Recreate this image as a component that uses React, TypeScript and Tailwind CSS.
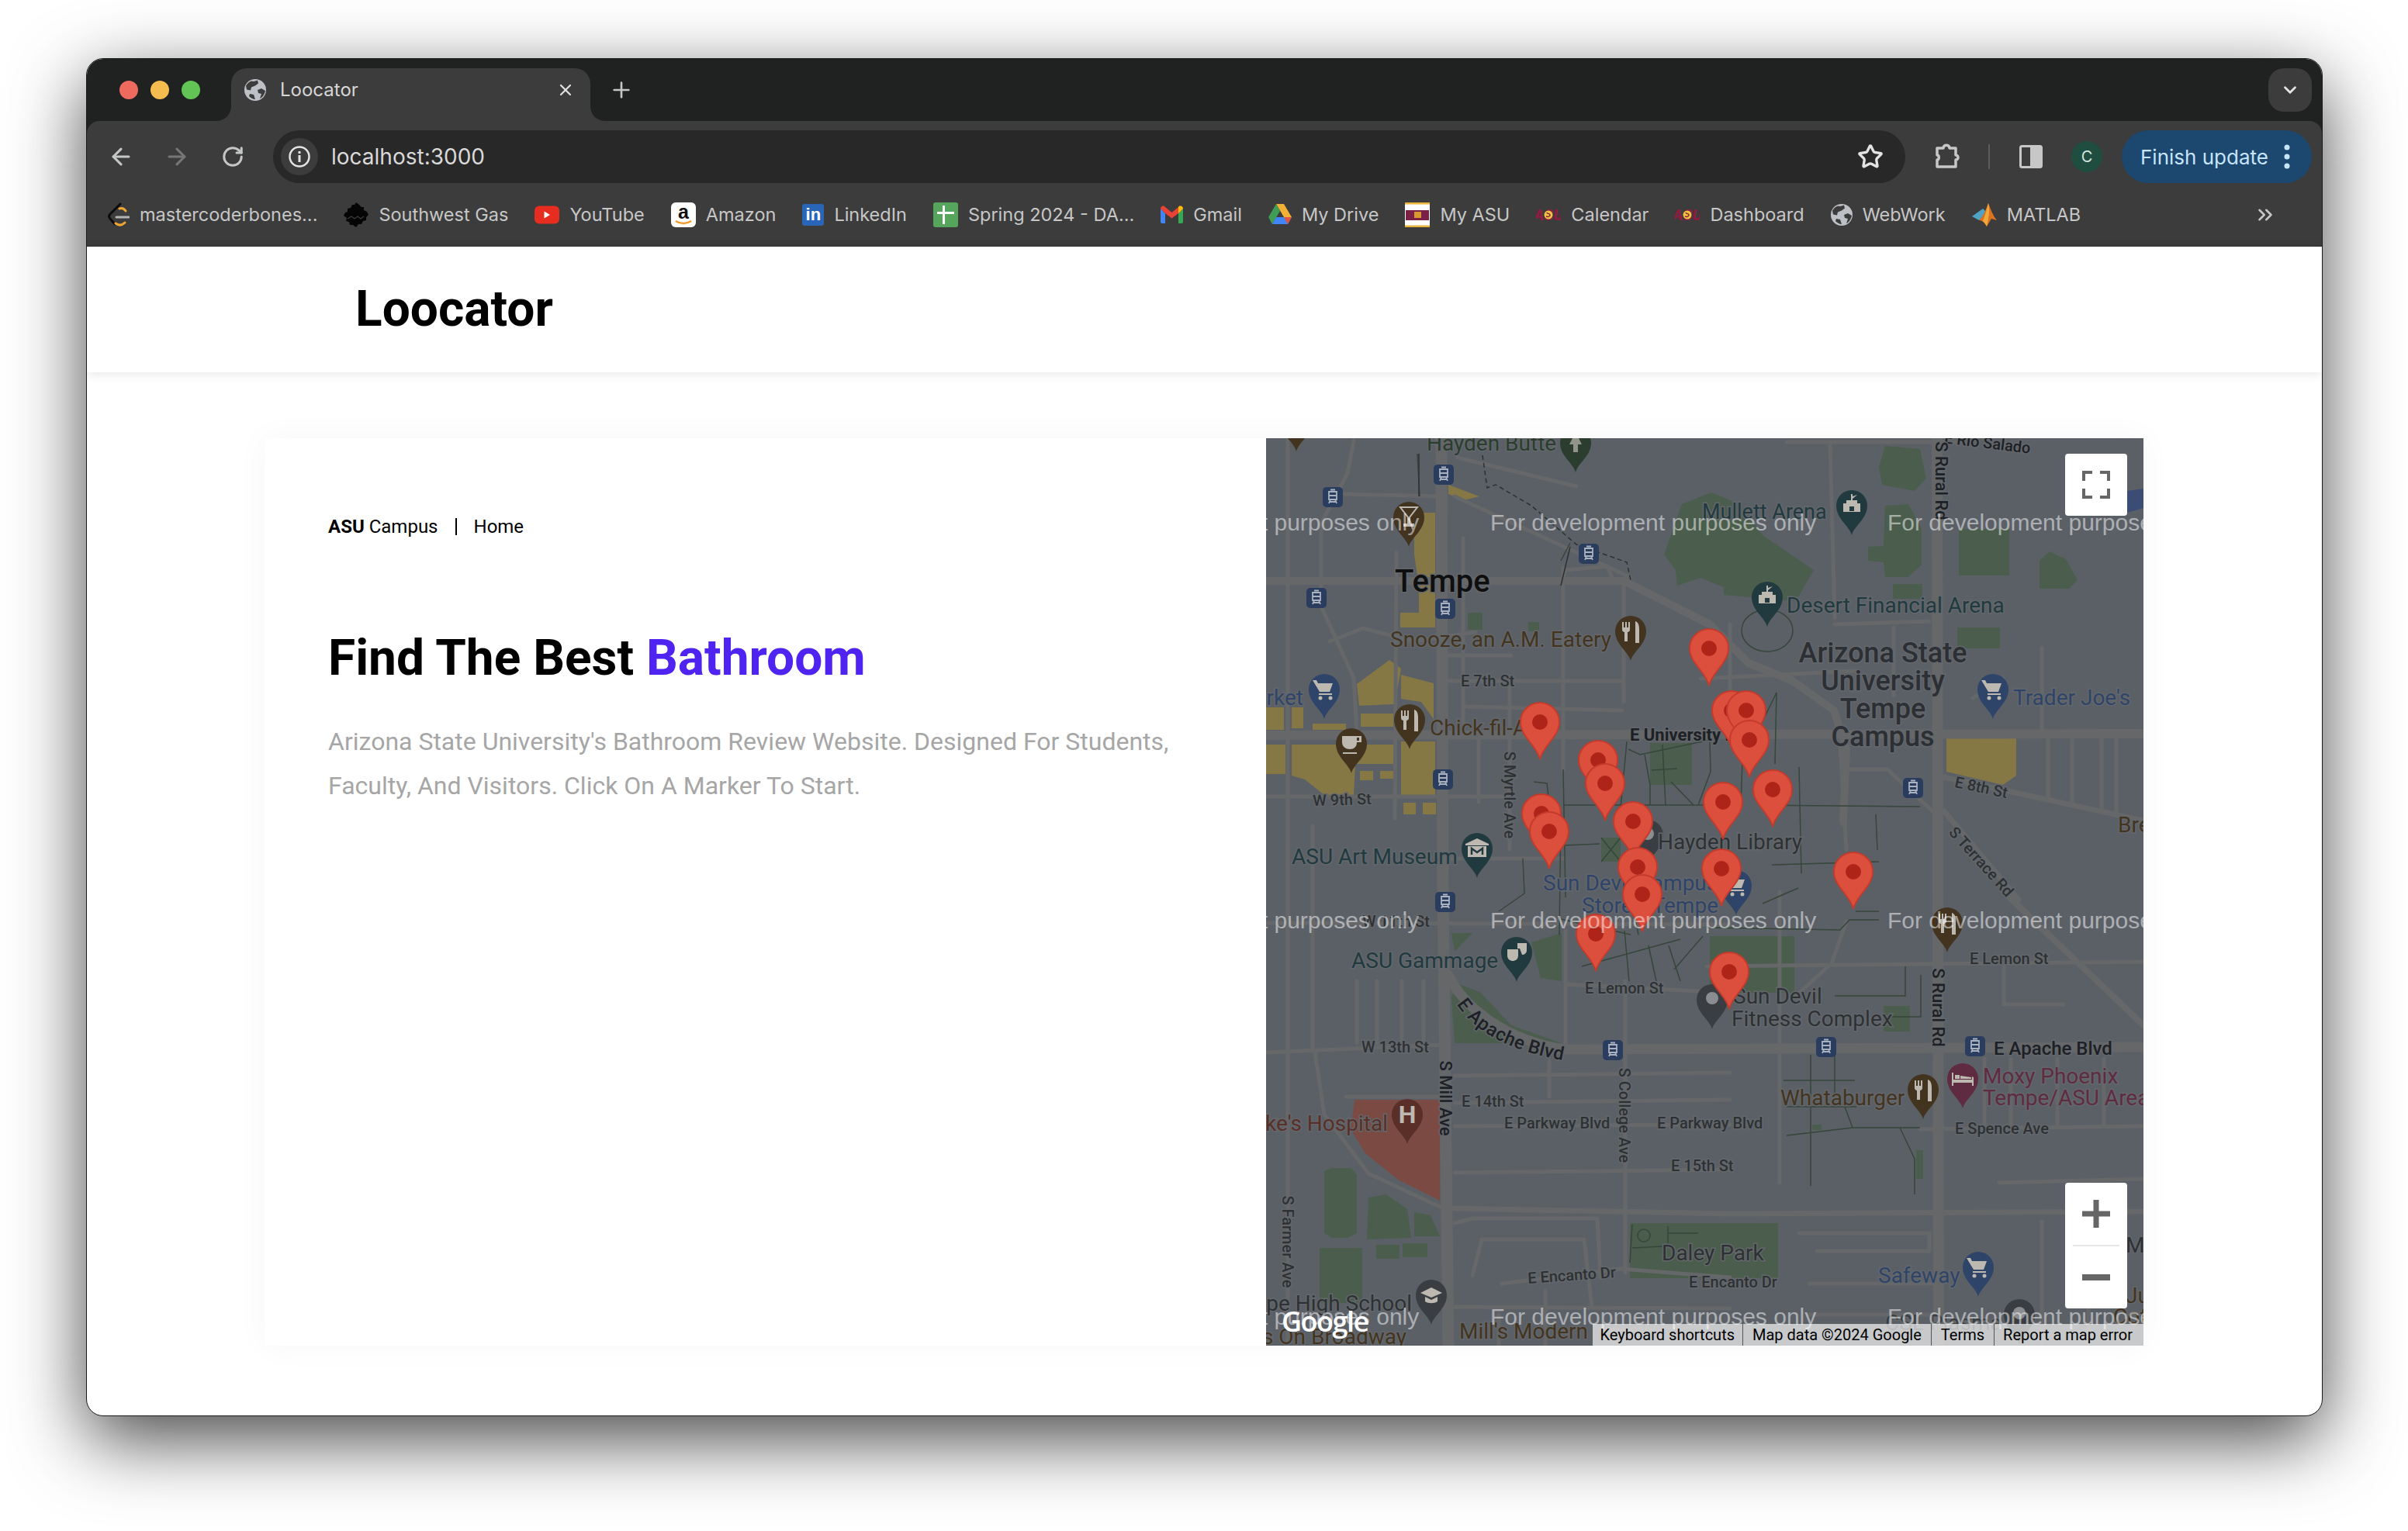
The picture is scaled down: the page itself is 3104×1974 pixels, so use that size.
import { ArrowLeft, ArrowRight, RotateCw, Star, X, Plus, ChevronDown, ChevronsRight } from "lucide-react";

const Globe = ({ size = 28 }: { size?: number }) => (
  <svg width={size} height={size} viewBox="0 0 28 28" className="shrink-0">
    <circle cx="14" cy="14" r="14" fill="#bdc1c6" />
    <path d="M9 2.5c3 1 5 0 8-1l1 4-4 3-5 2-1 4-5-1-1-5c2-3 4-5 7-6Z" fill="#3c3c3c" />
    <path d="M27 15l-5-3-5 2 1 4 4 1-2 6c3-1 6-5 7-10ZM7 19l5 1 2 6c-3 0-6-2-8-4Z" fill="#3c3c3c" />
  </svg>
);

const AsuMark = () => (
  <svg width="32" height="26" viewBox="0 0 32 26" className="shrink-0">
    <text x="16" y="20" textAnchor="middle" fontSize="20" fontWeight="900" fontStyle="italic" fill="#8c1d40" fontFamily="Roboto">ASU</text>
    <circle cx="16" cy="13" r="5.500" fill="#efc23f" />
    <path d="M13 15c3 1 5 0 5-2s-4-1-4-3" stroke="#8c1d40" strokeWidth="1.5" fill="none" />
  </svg>
);

const bookmarks = [
  {
    label: "mastercoderbones...",
    icon: (
      <svg width="28" height="32" viewBox="0 0 28 32" className="shrink-0">
        <path d="M16 2 3 15c-2 2-2 4 0 6l6 7" stroke="#0c0c0c" strokeWidth="3" fill="none" strokeLinecap="round" />
        <path d="M15 8c3-1 6 0 8 3M10 27c4 3 8 3 12-1" stroke="#f0a633" strokeWidth="3" fill="none" strokeLinecap="round" />
        <path d="M11 19h16" stroke="#b3b3b3" strokeWidth="3" strokeLinecap="round" />
      </svg>
    ),
  },
  {
    label: "Southwest Gas",
    icon: (
      <svg width="32" height="32" viewBox="0 0 32 32" className="shrink-0">
        <path d="M16 0l4 3 3 3 3 0 0 4 4 2 2 4-3 3 0 4-4 1-2 4-4 0-3 4-4-3-4 0-1-4-4-1 1-4-4-3 2-4 3-1 0-4 4-1 2-4 3 0Z" fill="#050505" />
        <path d="M5 21l5-3 4 3 4-3 4 3 4-3" stroke="#3c3c3c" strokeWidth="1.2" fill="none" />
      </svg>
    ),
  },
  {
    label: "YouTube",
    icon: (
      <svg width="32" height="24" viewBox="0 0 32 24" className="shrink-0">
        <rect width="32" height="23" y="0.5" rx="6" fill="#e62d20" />
        <path d="M12.5 7.5v9l7.5-4.5Z" fill="#fff" />
      </svg>
    ),
  },
  {
    label: "Amazon",
    icon: (
      <svg width="32" height="32" viewBox="0 0 32 32" className="shrink-0">
        <rect width="32" height="32" rx="6" fill="#fff" />
        <text x="16" y="21" textAnchor="middle" fontSize="25" fontWeight="700" fill="#111" fontFamily="Liberation Sans">a</text>
        <path d="M6 24c6 4 14 4 20 0" stroke="#f09a2a" strokeWidth="2.4" fill="none" />
      </svg>
    ),
  },
  {
    label: "LinkedIn",
    icon: (
      <span className="flex h-[28px] w-[28px] shrink-0 items-center justify-center rounded-[3px] bg-[#2a66b8] font-['Liberation_Sans',sans-serif] text-[22px] font-bold leading-none text-white">
        in
      </span>
    ),
  },
  {
    label: "Spring 2024 - DA...",
    icon: (
      <svg width="32" height="32" viewBox="0 0 32 32" className="shrink-0">
        <rect width="32" height="32" rx="3" fill="#55a65c" />
        <path d="M12 4h3v8h12v3H15v13h-3V15H5v-3h7Z" fill="#fff" />
      </svg>
    ),
  },
  {
    label: "Gmail",
    icon: (
      <svg width="29" height="23" viewBox="0 0 29 23" className="shrink-0">
        <path d="M0 4v17a2 2 0 0 0 2 2h4V10Z" fill="#4285f4" />
        <path d="M29 4v17a2 2 0 0 1-2 2h-4V10Z" fill="#34a853" />
        <path d="M0 4c0-3 4-5 6-2l8.500 7L23 2c2-3 6-1 6 2l-6 6-8.500 6.500L6 10Z" fill="#ea4335" />
        <path d="M23 2c2-3 6-1 6 2l-6 6Z" fill="#fbbc04" />
      </svg>
    ),
  },
  {
    label: "My Drive",
    icon: (
      <svg width="30" height="27" viewBox="0 0 30 27" className="shrink-0">
        <path d="M10 0h10l10 17H20Z" fill="#f2b134" />
        <path d="M10 0 0 17l5 9 10-17Z" fill="#3f9d55" />
        <path d="M5 26h20l5-9H10Z" fill="#4285f4" />
        <path d="M20 17h10l-5 9Z" fill="#e0533f" />
      </svg>
    ),
  },
  {
    label: "My ASU",
    icon: (
      <svg width="32" height="32" viewBox="0 0 32 32" className="shrink-0">
        <rect width="32" height="32" fill="#fff" />
        <rect width="32" height="2.500" fill="#e9b43c" />
        <rect y="29.500" width="32" height="2.500" fill="#e9b43c" />
        <rect x="1" y="10" width="30" height="13" fill="#7c2146" />
        <rect x="12" y="12" width="9" height="8" fill="#d79a33" />
      </svg>
    ),
  },
  { label: "Calendar", icon: <AsuMark /> },
  { label: "Dashboard", icon: <AsuMark /> },
  { label: "WebWork", icon: <Globe /> },
  {
    label: "MATLAB",
    icon: (
      <svg width="32" height="30" viewBox="0 0 32 30" className="shrink-0">
        <path d="M0 17 14 7l5 5-10 10Z" fill="#4fa3c7" />
        <path d="M21 0c3 8 6 16 11 22l-7-2-6 10c-3-5-6-8-10-8 6-6 9-14 12-22Z" fill="#d9731f" />
        <path d="M21 0c2 8 1 18-2 30-1-3-3-5-5-7 3-7 5-15 7-23Z" fill="#f2a93b" />
      </svg>
    ),
  },
];

const pins = [
  [571, 271], [353, 366], [428, 415], [437, 445], [355, 484], [365, 507], [473, 494], [479, 553],
  [485, 588], [589, 469], [653, 453], [587, 555], [757, 559], [600, 351], [619, 351], [623, 389],
  [425, 639], [597, 688],
];

const mainRoads: [string, number][] = [
  ["M226 0L228 585L235 1170", 15],
  ["M865 0L866 585L867 1170", 14],
  ["M0 383L1131 381", 12],
  ["M0 184L461 184L572 240L622 290L679 313L732 351L748 400L744 495", 10],
  ["M235 692C245 715 285 770 381 788L1131 785", 13],
  ["M874 437L1131 493", 7],
  ["M874 481L970 595", 7],
  ["M951 585L1131 757", 8],
  ["M243 993L598 1000L1131 997", 7],
];

const minorRoads = [
  "M28 0L28 1170", "M113 3L105 45L71 110L71 217L113 309L117 378", "M63 792L75 872L132 948L224 991",
  "M383 167L383 428", "M461 183L461 340", "M168 148L166 490", "M254 129L254 378", "M314 313L314 530",
  "M274 389L274 469", "M236 313L461 313", "M82 262L125 245L190 262L270 250", "M0 462L316 462", "M236 280L316 280",
  "M258 346L459 351", "M236 542L383 542", "M101 72L226 75", "M247 25L400 62", "M243 75L469 179",
  "M383 180L386 170L440 165L448 185", "M0 625L598 627", "M388 704L595 715", "M0 792L228 782", "M103 849L224 849",
  "M243 857L598 853", "M243 822L598 818", "M243 887L598 885", "M243 947L598 943", "M243 1012L266 1006L427 1006L431 1082",
  "M266 1080L278 1033L410 1033L420 1120", "M304 1090L457 1071L598 1082", "M243 1120L598 1122", "M463 700L463 1075",
  "M365 803L365 849", "M386 635L386 780", "M117 700L117 780", "M175 700L175 780", "M143 700L143 780", "M203 700L203 780",
  "M60 500L60 790", "M568 681L1131 675", "M843 891L1131 887", "M1008 386L1008 466", "M1039 386L1039 470", "M1077 386L1077 478",
  "M1096 386L1096 485", "M727 6L733 232", "M671 5L890 5", "M809 244L809 332", "M740 397L748 531", "M742 427L801 427L859 481",
  "M733 240L855 236", "M662 585L662 960", "M748 623L729 677L683 719", "M687 1025L855 1025L855 1048L710 1048", "M951 681L951 730L1028 730",
  "M911 335L950 310", "M1000 270L1000 380", "M598 240L598 350", "M560 310L760 300", "M430 1150L570 1145", "M700 1090L860 1090", "M700 1130L860 1130",
  "M945 960L1131 955", "M1000 1010L1000 1170", "M1060 1010L1060 1170", "M300 1130L300 1170", "M360 1100L360 1170", "M926 800L926 885", "M960 800L960 885", "M1020 800L1020 885", "M1080 800L1080 885",
];

const campusPaths = [
  "M383 427L386 592", "M384 473L598 473", "M465 391L457 477", "M467 401L482 408L572 389", "M488 408L495 447L495 473", "M497 428L530 426", "M511 395L515 473",
  "M522 443L551 473", "M572 392L573 430L557 473", "M345 443L362 445L364 462", "M381 525L430 523", "M331 542L333 587", "M333 587L300 610", "M687 424L690 561", "M641 473L843 475",
  "M786 485L788 531", "M652 550L790 546", "M658 328L656 420", "M658 328L640 365", "M614 416L612 473", "M407 681L534 646", "M462 635L468 700", "M493 654L503 700", "M519 654L534 700",
  "M563 642L526 685", "M568 631L740 634L752 621L790 621", "M733 719L824 719L824 681", "M844 692L844 746L805 746", "M702 795L702 964", "M667 828L759 828", "M733 795L733 845", "M671 862L761 862",
  "M671 899L756 889L843 889", "M746 862L756 889", "M817 889L836 929L836 975", "M472 1014L469 1063", "M472 1044L511 1042", "M518 1016L518 1040", "M518 1025L557 1025", "M432 515L457 546M432 546L457 515",
  "M380 490L378 640", "M380 620L470 640", "M470 590L480 640", "M195 20L198 75", "M380 158L392 135", "M686 580L640 600", "M760 610L790 610",
];

const parks = [
  "798,10 843,14 851,52 836,68 794,60 790,37", "798,87 828,85 845,117 845,163 828,179 798,179 796,160 776,158 776,140 796,139",
  "893,117 958,117 958,177 893,177", "997,158 1010,146 1031,156 1046,183 1035,194 997,194", "808,188 846,188 846,207 808,207", "891,244 946,244 946,271 891,271",
  "513,150 536,85 574,70 610,85 640,125 706,170 683,210 590,202 590,192 560,180 530,190 528,170", "239,638 266,638 243,662", "342,650 381,638 381,700 354,696",
  "239,720 243,780 381,780 316,757 277,715 250,704", "469,1012 660,1012 660,1083 469,1083", "75,945 85,941 110,941 117,950 117,1025 105,1031 85,1031 75,1025",
  "132,979 155,975 182,994 187,1031 130,1033", "191,998 212,1002 224,1029 191,1029", "142,1040 172,1040 172,1058 142,1058", "176,1038 208,1038 208,1056 176,1056",
  "69,1044 124,1044 124,1115 69,1115", "572,642 681,642 681,715 572,715", "796,732 830,732 830,765 796,765", "838,918 847,918 847,955 838,955", "432,515 457,515 457,546 432,546",
  "495,393 549,393 549,447 495,447", "260,225 279,225 279,247 260,247", "338,237 352,237 352,249 338,249", "704,885 716,885 716,892 704,892",
];

const yellow = [
  "191,96 218,96 218,244 173,244 173,225 197,225 197,190 191,150", "235,60 275,75 255,80 235,72", "117,317 159,286 174,297 166,343 120,345", "174,305 216,316 216,362 200,340 174,336",
  "122,355 164,355 164,372 122,372", "60,368 103,368 103,376 60,376", "33,347 48,347 48,374 33,374", "0,347 23,347 23,376 0,376", "0,395 25,395 25,433 0,433",
  "33,395 165,395 165,420 115,420 113,460 75,460 50,440 33,435", "121,429 138,429 138,441 121,441", "147,429 164,429 164,439 147,439", "174,391 218,391 218,460 174,460",
  "177,470 193,470 193,485 177,485", "202,470 219,470 219,485 202,485", "877,386 967,386 967,435 950,447 877,430",
];

const transit = [
  [229, 47], [86, 76], [416, 149], [65, 206], [231, 220], [228, 440], [231, 598], [834, 451], [447, 789], [722, 785], [914, 784],
];

const BROWN = "#43341f";
const TEAL = "#203a3f";
const BLUE = "#2f4469";
const GREY = "#2e3134";
const PLUM = "#5f2b40";

const pois: [number, number, string, string][] = [
  [39, -21, BROWN, ""], [399, 6, "#2b3d2f", "tree"], [184, 102, BROWN, "glass"], [470, 249, BROWN, "fork"], [185, 363, BROWN, "fork"], [110, 394, BROWN, "cup"],
  [75, 324, BLUE, "cart"], [272, 529, TEAL, "museum"], [755, 87, TEAL, "arena"], [646, 205, TEAL, "arena"], [937, 324, BLUE, "cart"], [606, 577, BLUE, "cart"],
  [492, 512, "#3a3e42", "dot"], [323, 663, TEAL, "masks"], [182, 872, "#5a2f28", "H"], [213, 1105, "#3a3e42", "cap"], [575, 724, "#3a3e42", "dot"], [878, 625, BROWN, "fork"],
  [847, 840, BROWN, "fork"], [898, 826, PLUM, "bed"], [918, 1069, BLUE, "cart"], [971, 1130, "#3a3e42", "dot"],
];

type Label = [string, number, number, number, string, ("start" | "middle" | "end")?, number?, number?];

const labels: Label[] = [
  ["Hayden Butte", 207, 6, 28, "#2b3d2f"], ["Mullett Arena", 562, 95, 27, TEAL], ["Tempe", 166, 184, 40, "#0f0f10", "start", 0, 500],
  ["Snooze, an A.M. Eatery", 160, 259, 28, BROWN], ["E 7th St", 251, 313, 20, GREY, "start", 0, 500], ["Market", 48, 334, 28, BLUE, "end"], ["Chick-fil-A", 211, 373, 28, BROWN],
  ["E University Dr", 469, 382, 22, "#1d2024", "start", 0, 700], ["W 9th St", 98, 466, 20, GREY, "middle", -2, 500], ["S Myrtle Ave", 314, 460, 20, GREY, "middle", 90, 500],
  ["ASU Art Museum", 33, 539, 28, TEAL], ["Sun Devil Campus", 357, 573, 28, BLUE], ["Store", 407, 602, 28, BLUE], ["Tempe", 583, 602, 28, BLUE, "end"], ["Hayden Library", 505, 520, 28, GREY],
  ["Desert Financial Arena", 671, 215, 28, TEAL], ["Arizona State", 795, 277, 36, "#2c2f33", "middle", 0, 500], ["University", 795, 313, 36, "#2c2f33", "middle", 0, 500],
  ["Tempe", 795, 349, 36, "#2c2f33", "middle", 0, 500], ["Campus", 795, 385, 36, "#2c2f33", "middle", 0, 500], ["Trader Joe's", 963, 334, 28, BLUE], ["E Rio Salado", 930, 6, 20, "#1d2024", "middle", 7, 500],
  ["S Rural Rd", 870, 55, 22, "#1d2024", "middle", 90, 500], ["E 8th St", 922, 450, 20, GREY, "middle", 12, 500], ["S Terrace Rd", 922, 546, 20, GREY, "middle", 48, 500], ["Breakfast", 1098, 498, 28, BROWN],
  ["W 11th St", 124, 623, 20, GREY, "start", 0, 500], ["ASU Gammage", 110, 673, 28, TEAL], ["E Lemon St", 411, 709, 20, GREY, "start", 0, 500], ["W 13th St", 123, 785, 20, GREY, "start", 0, 500],
  ["S Mill Ave", 231, 851, 22, "#1d2024", "middle", 90, 500], ["E 14th St", 252, 855, 20, GREY, "start", 0, 500], ["E Parkway Blvd", 307, 883, 20, GREY, "start", 0, 500],
  ["S College Ave", 462, 873, 20, GREY, "middle", 90, 500], ["E Parkway Blvd", 504, 883, 20, GREY, "start", 0, 500], ["E 15th St", 522, 938, 20, GREY, "start", 0, 500],
  ["St Luke's Hospital", 157, 883, 28, "#5a2f28", "end"], ["S Farmer Ave", 28, 1036, 20, GREY, "middle", 90, 500], ["Daley Park", 510, 1050, 28, GREY], ["E Encanto Dr", 394, 1079, 20, GREY, "middle", -4, 500],
  ["E Encanto Dr", 545, 1088, 20, GREY, "start", 0, 500], ["Tempe High School", 188, 1115, 28, GREY, "end"], ["s On Broadway", 181, 1158, 28, BROWN, "end"], ["Mill's Modern", 249, 1151, 28, BROWN],
  ["Sun Devil", 602, 719, 28, GREY], ["Fitness Complex", 600, 748, 28, GREY], ["E Lemon St", 907, 671, 20, GREY, "start", 0, 500], ["S Rural Rd", 866, 734, 22, "#1d2024", "middle", 90, 500],
  ["E Apache Blvd", 938, 787, 24, "#1d2024", "start", 0, 500], ["Moxy Phoenix", 924, 822, 28, PLUM], ["Tempe/ASU Area", 924, 850, 28, PLUM], ["Whataburger", 663, 850, 28, BROWN],
  ["E Spence Ave", 888, 890, 20, GREY, "start", 0, 500], ["Safeway", 789, 1079, 28, BLUE], ["Museum", 1108, 1040, 28, GREY], ["Juice", 1108, 1105, 28, BROWN], ["Coffee", 1092, 1132, 28, BROWN], ["CSL Plasma", 798, 1140, 28, "#3a3e42"],
];

const Glyph = ({ kind, fill }: { kind: string; fill: string }) => {
  const c = "#bdb9b1";
  if (kind === "fork")
    return (
      <g fill={c}>
        <path d="M-11 -12h2v7h2v-7h2v7h2v-7h2v10c0 2-2 3-3 3v12h-4V1c-1 0-3-1-3-3Z" />
        <path d="M6 -13c4 1 5 6 5 11v17H6Z" />
      </g>
    );
  if (kind === "cup")
    return (
      <g fill={c}>
        <path d="M-12 -10H7V-2C7 4 3 7-2 7S-12 4-12-2Z" />
        <path d="M7 -10h6v8H7v-2h3v-4H7Z" />
        <rect x="-11" y="11" width="18" height="2" />
      </g>
    );
  if (kind === "glass")
    return <path d="M-11 -13H11L1 0V9H6V11H-6V9H-1V0Z" fill="none" stroke={c} strokeWidth="2" />;
  if (kind === "cart")
    return (
      <g fill={c}>
        <path d="M-15 -12h5l2 4h19l-4 11H-6Z" />
        <rect x="-7" y="5" width="17" height="2" />
        <circle cx="-5" cy="11" r="2.500" />
        <circle cx="8" cy="11" r="2.500" />
      </g>
    );
  if (kind === "museum")
    return (
      <g>
        <path d="M0 -13 15 -6V-4H-15V-6Z" fill={c} />
        <rect x="-12" y="-3" width="24" height="14" fill={c} />
        <path d="M-7 8V0L0 5 7 0V8" stroke={fill} strokeWidth="2.500" fill="none" />
      </g>
    );
  if (kind === "arena")
    return (
      <g fill={c}>
        <path d="M-1 -15h2v3l6 -2-6 5v2h6v4h4V8h-22V-3h4v-4h6Z" />
        <rect x="-3" y="1" width="6" height="6" fill={fill} />
      </g>
    );
  if (kind === "masks")
    return (
      <g fill={c}>
        <path d="M-12 -4H2V4C2 9-2 11-5 11S-12 9-12 4Z" />
        <path d="M1 -12H13V-3C13 1 10 3 7 3L4 -5H1Z" />
      </g>
    );
  if (kind === "H")
    return (
      <text x="0" y="11" textAnchor="middle" fontSize="32" fontWeight="700" fill={c} fontFamily="Roboto">
        H
      </text>
    );
  if (kind === "bed")
    return (
      <g fill={c}>
        <path d="M-14 -8h2V1h24V-3l2 1V9h-2V5h-24V9h-2Z" />
        <rect x="-10" y="-5" width="6" height="5" />
        <path d="M-3 -4 11 -2V0H-3Z" />
      </g>
    );
  if (kind === "cap")
    return (
      <g fill={c}>
        <path d="M0 -10 14 -3 0 3 -14 -3Z" />
        <path d="M-8 2 0 6 8 2V8C4 11-4 11-8 8Z" />
      </g>
    );
  if (kind === "dot") return <circle cx="0" cy="-2" r="8" fill="#8b8d90" />;
  if (kind === "tree") return <path d="M0 -14 8 2H3V12H-3V2H-8Z" fill={c} opacity="0.7" />;
  return null;
};

const MapSvg = () => (
  <svg width="1131" height="1170" viewBox="0 0 1131 1170" className="block font-['Roboto',sans-serif]">
    <rect width="1131" height="1170" fill="#5b6067" />
    <polygon points="1110,68 1131,65 1131,90 1110,96" fill="#3b4d75" />
    <polygon points="114,853 224,853 224,983 170,956 128,922 109,891" fill="#7b4b43" />
    {parks.map((p, i) => (
      <polygon key={i} points={p} fill="#4b5d4c" />
    ))}
    {yellow.map((p, i) => (
      <polygon key={i} points={p} fill="#857845" />
    ))}
    <g fill="none" stroke="#666769" strokeLinecap="round" strokeLinejoin="round">
      {minorRoads.map((d, i) => (
        <path key={i} d={d} strokeWidth="5" />
      ))}
      {mainRoads.map(([d, w], i) => (
        <path key={i} d={d} strokeWidth={w} />
      ))}
    </g>
    <g fill="none" stroke="#36463a" strokeWidth="1.500">
      {campusPaths.map((d, i) => (
        <path key={i} d={d} />
      ))}
      <ellipse cx="646" cy="248" rx="33" ry="27" />
      <circle cx="487" cy="1028" r="8" />
      <path d="M279 22L285 64L296 60L342 87L400 137L465 160L470 183" strokeDasharray="6 4" stroke="#2d3034" />
      <path d="M197 75V20M380 190L392 140" stroke="#2d3034" />
    </g>

    {transit.map(([x, y], i) => (
      <g key={i} transform={`translate(${x} ${y})`}>
        <rect x="-13" y="-13" width="26" height="26" rx="5" fill="#2b3d5e" />
        <path d="M-5 -7h10v10H-5ZM-3 -9.500h6M-3 3l-2 5M3 3l2 5M-4 6h8M-5 -2h10" fill="none" stroke="#aab2c0" strokeWidth="1.800" />
      </g>
    ))}
    {pois.map(([x, y, fill, kind], i) => (
      <g key={i} transform={`translate(${x} ${y})`}>
        <path d="M0 38C-3 26-20 17-20 0A20 20 0 1 1 20 0C20 17 3 26 0 38Z" fill={fill} />
        <Glyph kind={kind} fill={fill} />
      </g>
    ))}

    <g dominantBaseline="central" stroke="#63676b" strokeWidth="3" className="[paint-order:stroke]">
      {labels.map(([text, x, y, size, color, anchor, rotate, weight], i) => (
        <text
          key={i}
          x={x}
          y={y}
          fontSize={size}
          fill={color}
          textAnchor={anchor ?? "start"}
          fontWeight={weight ?? 400}
          transform={rotate ? `rotate(${rotate} ${x} ${y})` : undefined}
        >
          {text}
        </text>
      ))}
      <path id="apache" d="M252 725C275 760 320 785 400 797" fill="none" stroke="none" />
      <text fontSize="24" fontWeight="500" fill="#1d2024">
        <textPath href="#apache">E Apache Blvd</textPath>
      </text>
    </g>

    {pins.map(([x, y], i) => (
      <g key={i} transform={`translate(${x} ${y})`}>
        <path d="M0 48C-4 30-25 19-25 0A25 25 0 1 1 25 0C25 19 4 30 0 48Z" fill="#dd4f3d" stroke="#c33b2c" strokeWidth="2" />
        <circle r="10" fill="#ae2419" />
      </g>
    ))}

    <g fill="#fff" fillOpacity="0.5" fontSize="30" dominantBaseline="central" className="font-['Liberation_Sans',sans-serif]">
      {[108, 621, 1132].map((y) =>
        [-223, 289, 801].map((x) => (
          <text key={`${x}-${y}`} x={x} y={y}>
            For development purposes only
          </text>
        ))
      )}
    </g>
  </svg>
);

const MapPanel = () => (
  <div className="relative h-[1170px] w-[1131px] shrink-0 overflow-hidden">
    <MapSvg />

    <button className="absolute right-[21px] top-[20px] flex h-[80px] w-[80px] items-center justify-center rounded-[4px] bg-white">
      <svg width="36" height="36" viewBox="0 0 36 36" fill="none" stroke="#666" strokeWidth="4">
        <path d="M2 13V2h11M23 2h11v11M34 23v11H23M13 34H2V23" />
      </svg>
    </button>

    <div className="absolute bottom-[48px] right-[21px] flex h-[162px] w-[80px] flex-col items-center rounded-[4px] bg-white">
      <div className="flex h-[80px] items-center justify-center">
        <svg width="36" height="36" viewBox="0 0 36 36" fill="#666">
          <path d="M14.500 0h7v14.500H36v7H21.500V36h-7V21.500H0v-7h14.500Z" />
        </svg>
      </div>
      <div className="h-[2px] w-[60px] bg-[#e6e6e6]" />
      <div className="flex h-[80px] items-center justify-center">
        <div className="h-[8px] w-[36px] bg-[#666]" />
      </div>
    </div>

    <span className="absolute bottom-[8px] left-[20px] font-['Open_Sans',sans-serif] text-[36px] font-semibold leading-[46px] tracking-[-1.500px] text-white">
      Google
    </span>

    <div className="absolute bottom-0 right-0 flex h-[28px] items-center bg-[#ffffffa8] font-['Roboto',sans-serif] text-[20px] leading-[28px] text-black">
      <span className="border-r border-[#555] px-[10px]">Keyboard shortcuts</span>
      <span className="border-r border-[#555] px-[12px]">Map data ©2024 Google</span>
      <span className="border-r border-[#555] px-[12px]">Terms</span>
      <span className="pl-[11px] pr-[14px]">Report a map error</span>
    </div>
  </div>
);

const BrowserChrome = () => (
  <div className="bg-[#202221] font-['Inter',sans-serif]">
    <div className="flex h-[80px] items-end">
      <div className="mb-[28px] ml-[42px] flex gap-[16px]">
        <span className="h-[24px] w-[24px] rounded-full bg-[#ee6a5f]" />
        <span className="h-[24px] w-[24px] rounded-full bg-[#f5bd4f]" />
        <span className="h-[24px] w-[24px] rounded-full bg-[#61c454]" />
      </div>
      <div className="relative ml-[40px] flex h-[68px] w-[463px] items-center rounded-t-[20px] bg-[#3c3c3c] pb-[12px] pl-[17px] pr-[20px]">
        <svg className="absolute bottom-0 left-[-20px]" width="20" height="20" viewBox="0 0 20 20">
          <path d="M20 0V20H0C12 20 20 12 20 0Z" fill="#3c3c3c" />
        </svg>
        <svg className="absolute bottom-0 right-[-20px]" width="20" height="20" viewBox="0 0 20 20">
          <path d="M0 0V20H20C8 20 0 12 0 0Z" fill="#3c3c3c" />
        </svg>
        <Globe />
        <span className="ml-[18px] text-[24px] text-[#d6d6d6]">Loocator</span>
        <X className="ml-auto h-[24px] w-[24px] text-[#e2e2e2]" strokeWidth={2.2} />
      </div>
      <Plus className="mb-[24px] ml-[24px] h-[32px] w-[32px] text-[#c4c7c5]" strokeWidth={2} />
      <div className="mb-[12px] ml-auto mr-[13px] flex h-[56px] w-[56px] items-center justify-center rounded-[20px] bg-[#3c3c3c]">
        <ChevronDown className="h-[26px] w-[26px] text-[#e3e3e3]" strokeWidth={2.6} />
      </div>
    </div>

    <div className="rounded-t-[16px] border-b border-[#333] bg-[#3c3c3c] pt-[12px]">
      <div className="flex h-[68px] items-center pl-[8px] pr-[13px]">
        <div className="flex h-[72px] w-[72px] items-center justify-center">
          <ArrowLeft className="h-[34px] w-[34px] text-[#c4c7c5]" strokeWidth={2.2} />
        </div>
        <div className="flex h-[72px] w-[72px] items-center justify-center">
          <ArrowRight className="h-[34px] w-[34px] text-[#747775]" strokeWidth={2.2} />
        </div>
        <div className="flex h-[72px] w-[72px] items-center justify-center">
          <RotateCw className="h-[30px] w-[30px] text-[#c4c7c5]" strokeWidth={2.4} />
        </div>
        <div className="ml-[16px] flex h-[68px] flex-1 items-center rounded-full bg-[#282828] pl-[10px] pr-[28px]">
          <span className="flex h-[48px] w-[48px] items-center justify-center rounded-full bg-[#3c3c3c]">
            <svg width="30" height="30" viewBox="0 0 30 30" fill="none">
              <circle cx="15" cy="15" r="12.500" stroke="#e3e3e3" strokeWidth="2.500" />
              <rect x="13.500" y="13" width="3" height="9" fill="#e3e3e3" />
              <rect x="13.500" y="8" width="3" height="3" fill="#e3e3e3" />
            </svg>
          </span>
          <span className="ml-[17px] text-[28px] text-[#d9d9d9]">localhost:3000</span>
          <Star className="ml-auto h-[34px] w-[34px] text-[#e3e3e3]" strokeWidth={2.4} />
        </div>
        <div className="ml-[20px] flex h-[68px] w-[68px] items-center justify-center">
          <svg width="34" height="34" viewBox="0 0 34 34" fill="none" stroke="#c7c7c7" strokeWidth="3.500" strokeLinejoin="round">
            <path d="M4 6h8c0-5 8-5 8 0h8v9c4 0 4 6 0 6v9H4v-9c3 0 3-6 0-6Z" />
          </svg>
        </div>
        <div className="ml-[19px] h-[32px] w-[2px] bg-[#5c5c5c]" />
        <div className="ml-[19px] flex h-[68px] w-[68px] items-center justify-center">
          <svg width="30" height="30" viewBox="0 0 30 30">
            <rect x="1.500" y="1.500" width="27" height="27" rx="2" fill="none" stroke="#c7c7c7" strokeWidth="3" />
            <rect x="14" y="1.500" width="14.500" height="27" fill="#c7c7c7" />
          </svg>
        </div>
        <div className="ml-[18px] flex h-[40px] w-[40px] items-center justify-center rounded-full bg-[#1f4d3f] text-[20px] text-[#d5e8e0]">C</div>
        <div className="ml-[25px] flex h-[68px] w-[245px] items-center rounded-full bg-[#1c476f] pl-[24px] text-[26px] text-[#c7e4fb]">
          Finish update
          <svg className="ml-auto mr-[28px]" width="8" height="32" viewBox="0 0 8 32" fill="#c7e4fb">
            <circle cx="4" cy="4" r="3.500" />
            <circle cx="4" cy="16" r="3.500" />
            <circle cx="4" cy="28" r="3.500" />
          </svg>
        </div>
      </div>

      <div className="flex h-[81px] items-center gap-[34px] pl-[27px] pr-[58px]">
        {bookmarks.map((b) => (
          <div key={b.label} className="flex items-center gap-[13px]">
            {b.icon}
            <span className="whitespace-nowrap text-[23.5px] text-[#c7c7c7]">{b.label}</span>
          </div>
        ))}
        <ChevronsRight className="ml-auto h-[30px] w-[30px] text-[#c7c7c7]" strokeWidth={2} />
      </div>
    </div>
  </div>
);

const App = () => {
  return (
    <div className="h-[1974px] w-[3104px] overflow-hidden bg-white pl-[111px] pt-[75px]">
      <div className="flex h-[1751px] w-[2883px] flex-col overflow-hidden rounded-[22px] border border-[#1a1a1a] bg-white shadow-[0_30px_95px_rgba(0,0,0,0.72)]">
        <BrowserChrome />

        <nav className="z-10 flex h-[162px] shrink-0 items-center bg-white pl-[346px] shadow-[0_2px_14px_rgba(0,0,0,0.1)]">
          <h1 className="font-['Roboto',sans-serif] text-[64px] font-bold leading-none text-black">Loocator</h1>
        </nav>

        <main className="flex-1 pl-[229px] pt-[85px]">
          <div className="flex w-[2422px] bg-white shadow-[0_0_40px_rgba(0,0,0,0.04)]">
            <div className="w-[1291px] pl-[82px] pt-[98px] font-['Roboto',sans-serif]">
              <p className="flex h-[32px] items-center text-[24px] text-black">
                <span>
                  <span className="font-bold">ASU</span> Campus
                </span>
                <span className="mx-[22px] h-[22px] w-[2px] bg-black" />
                <span>Home</span>
              </p>
              <h2 className="mt-[116px] text-[64px] font-bold leading-[76px] text-black">
                Find The Best <span className="text-[#4f23f0]">Bathroom</span>
              </h2>
              <p className="mt-[41px] text-[32px] leading-[57px] text-[#a6a6a6]">
                Arizona State University's Bathroom Review Website. Designed For Students,
                <br />
                Faculty, And Visitors. Click On A Marker To Start.
              </p>
            </div>
            <MapPanel />
          </div>
        </main>
      </div>
    </div>
  );
};

export default App;
